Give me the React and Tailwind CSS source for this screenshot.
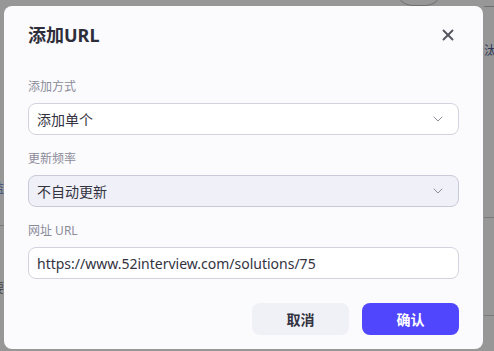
import React from 'react'
import { X, ChevronDown } from 'lucide-react'

const font = { fontFamily: '"Noto Sans", "Noto Sans CJK SC", sans-serif' }

function Field({ label, children, className = '' }) {
  return (
    <div className={className}>
      <div className="text-[12px] leading-5 text-[#8b8b99] mb-1.5">{label}</div>
      {children}
    </div>
  )
}

function SelectBox({ value, muted }) {
  return (
    <div
      className={`h-8 flex items-center justify-between pl-2 pr-3 rounded-lg border ${
        muted ? 'bg-[#f0f0f8] border-[#c9c9da]' : 'bg-white border-[#d3d3e0]'
      }`}
    >
      <span className="text-[14px] text-[#33333f]">{value}</span>
      <ChevronDown className="w-4 h-4 text-[#8d8d9b]" strokeWidth={1.5} />
    </div>
  )
}

export default function App() {
  return (
    <div className="relative w-[494px] h-[351px] bg-[#979797] overflow-hidden" style={font}>
      {/* faded page behind the overlay */}
      <div className="absolute left-[395px] -top-[30px] w-[48px] h-[36px] rounded-full border border-[#6f6f6f]" />
      <div className="absolute left-[484px] top-[6px] w-[10px] h-px bg-[#6f6f6f]" />
      <div className="absolute left-[484px] top-[42px] text-[12px] text-[#2b3556]">汰</div>
      <div className="absolute left-0 top-[225px] w-[4px] h-px bg-[#7a7a7a]" />
      <div className="absolute -left-[8px] top-[180px] text-[12px] text-[#3a4a7a]">监</div>
      <div className="absolute -left-[8px] top-[280px] text-[12px] text-[#444]">要</div>
      <div className="absolute left-[484px] top-[217px] w-[10px] h-px bg-[#7a7a7a]" />
      <div className="absolute left-[484px] top-[315px] w-[10px] h-px bg-[#7a7a7a]" />

      <div className="absolute left-[4px] top-[6px] w-[479px] h-[343px] bg-[#fbfbfe] rounded-lg px-6 pt-[15px]">
        <div className="flex items-center justify-between">
          <h2 className="text-[18px] leading-7 font-bold text-[#2e2e3a]">添加URL</h2>
          <X className="w-[18px] h-[18px] text-[#55555f] mr-[2px]" strokeWidth={2.5} />
        </div>

        <Field label="添加方式" className="mt-[28px]">
          <SelectBox value="添加单个" />
        </Field>

        <Field label="更新频率" className="mt-[14px]">
          <SelectBox value="不自动更新" muted />
        </Field>

        <Field label="网址 URL" className="mt-[14px]">
          <div className="h-8 flex items-center pl-2 rounded-lg border border-[#d3d3e0] bg-white">
            <span className="text-[14px] text-[#33333f]">https://www.52interview.com/solutions/75</span>
          </div>
        </Field>

        <div className="flex justify-end gap-[13px] mt-6">
          <button className="w-[97px] h-8 rounded-lg bg-[#f0f0f7] text-[14px] font-bold text-[#33333f]">
            取消
          </button>
          <button className="w-[97px] h-8 rounded-lg bg-[#5046fe] text-[14px] font-bold text-white">
            确认
          </button>
        </div>
      </div>
    </div>
  )
}
